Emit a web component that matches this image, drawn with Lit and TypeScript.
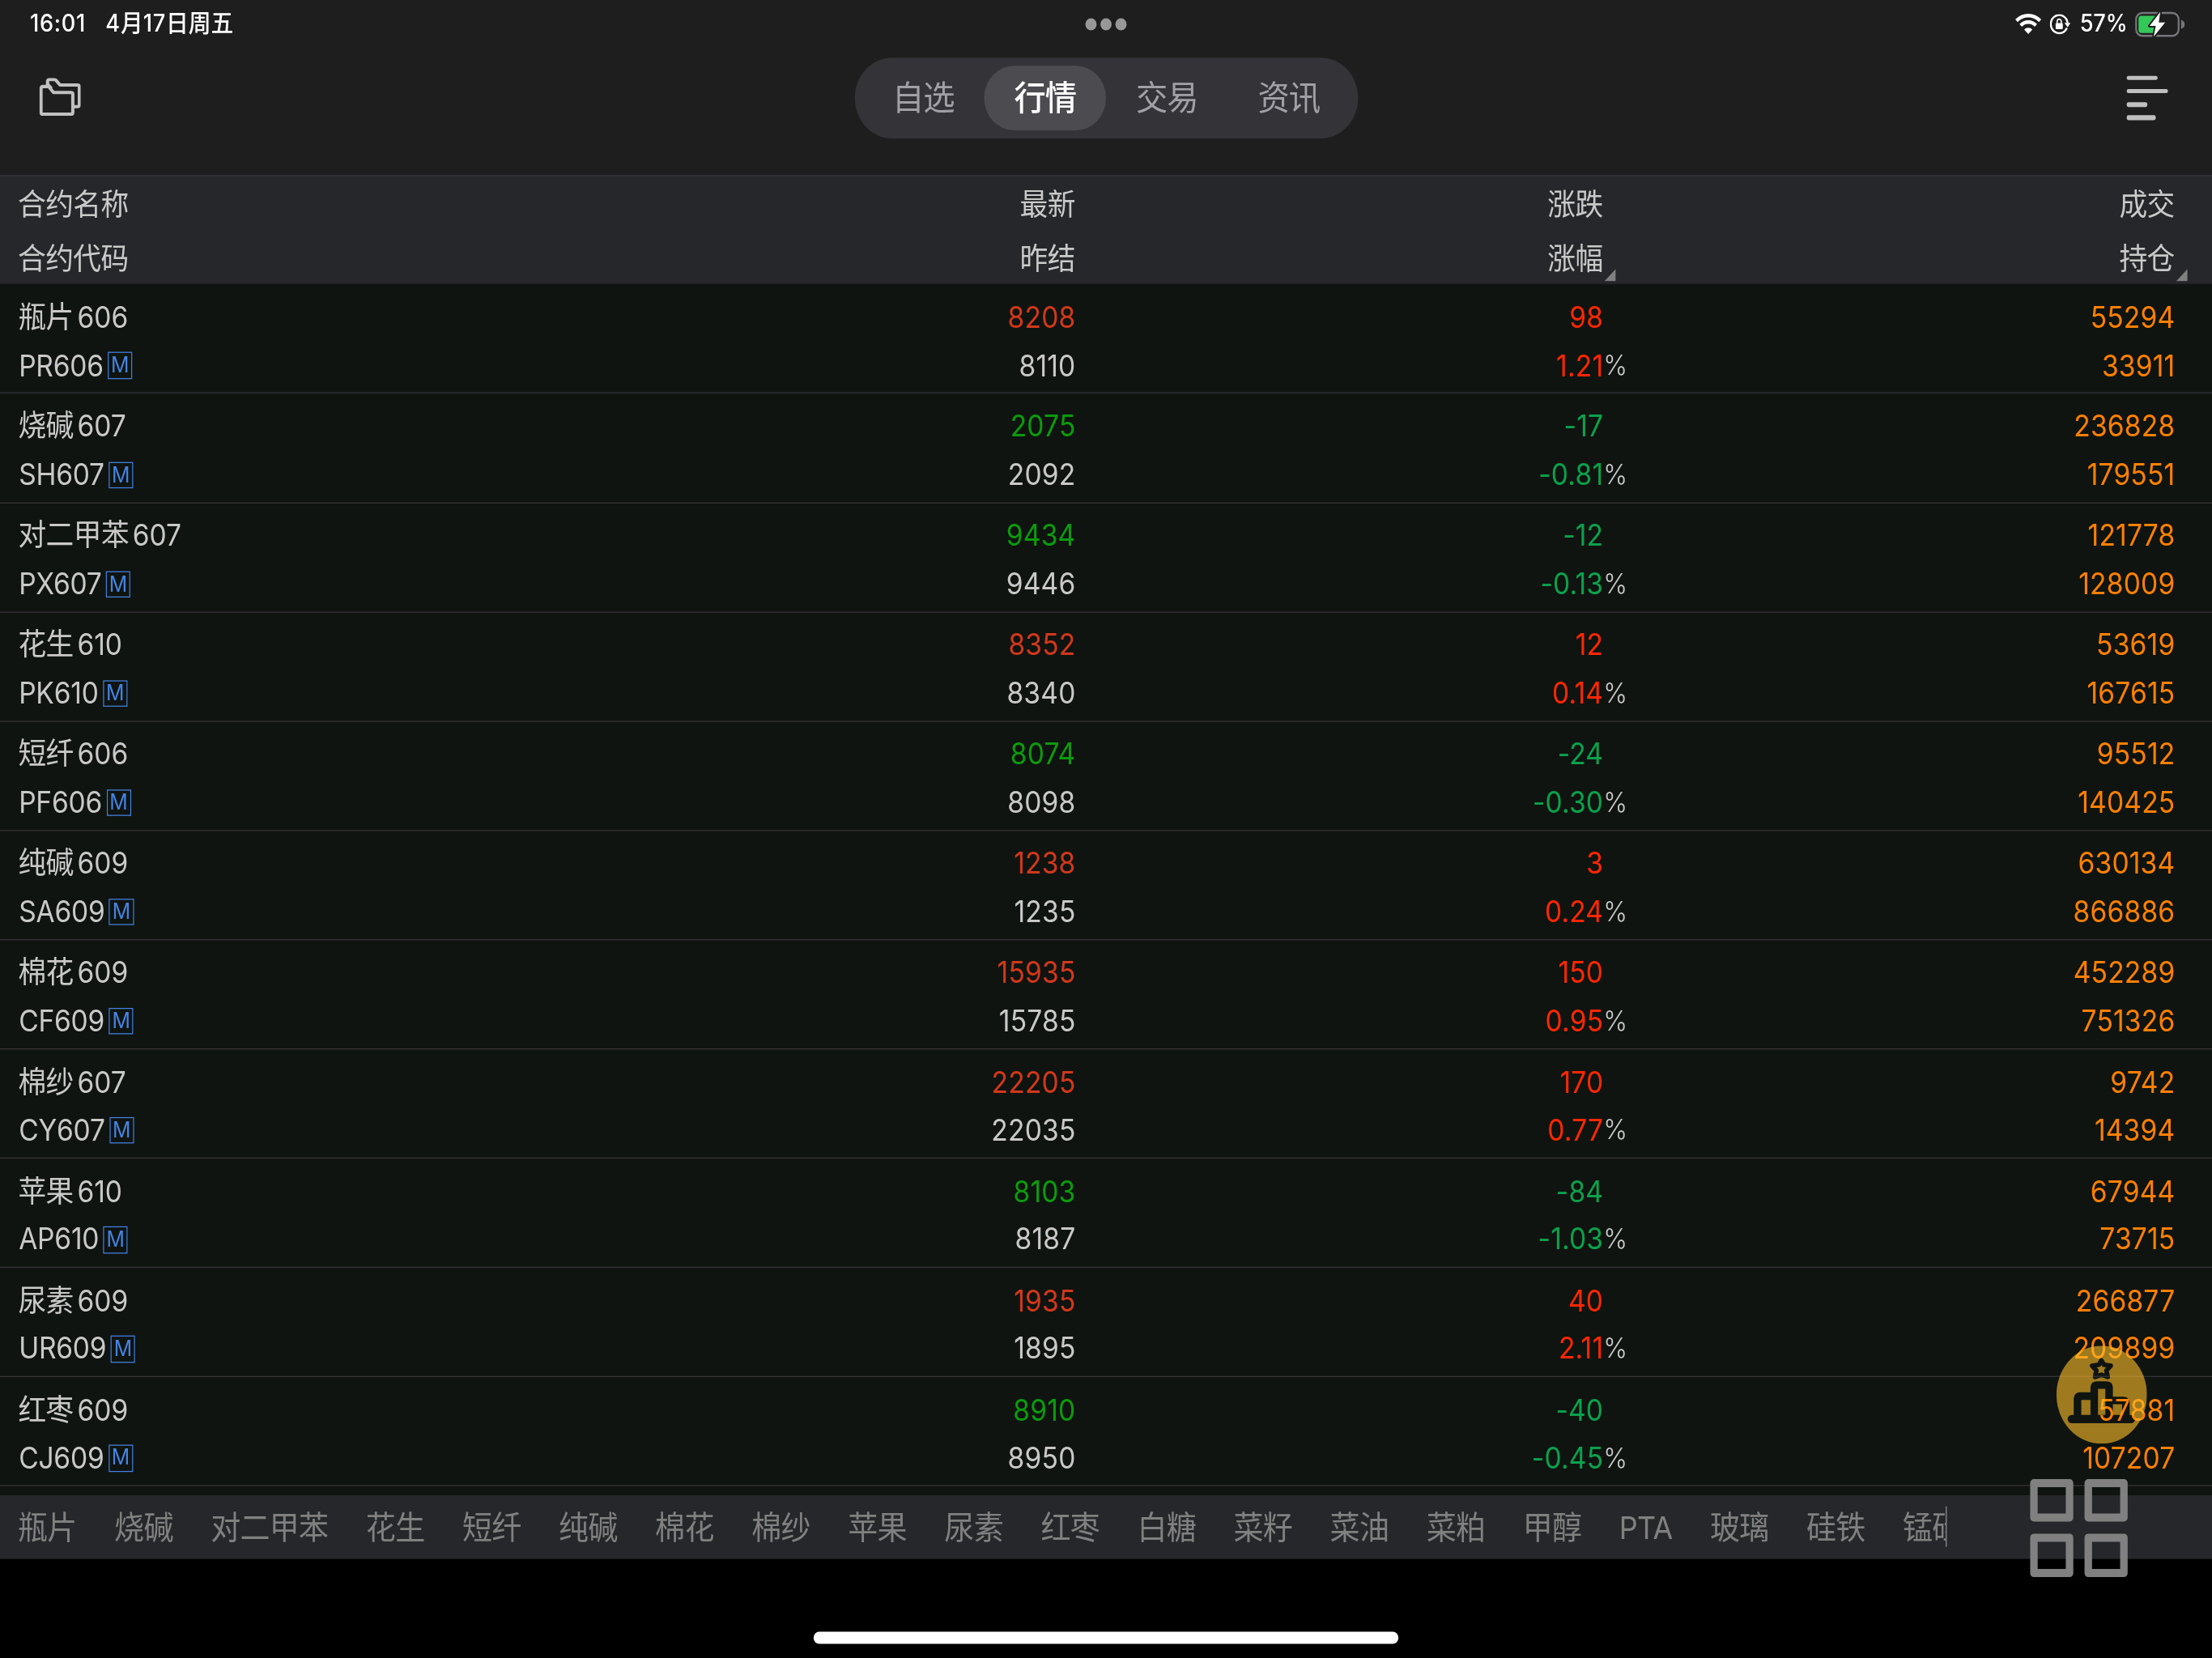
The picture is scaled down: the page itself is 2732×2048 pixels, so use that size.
import { LitElement, html, css, svg } from "lit";
import { customElement, property } from "lit/decorators.js";

type Quote = [name: string, month: string, code: string, last: string, prev: string, diff: string, pct: string, vol: string, oi: string];

const QUOTES: Quote[] = [
  ["瓶片", "606", "PR606", "8208", "8110", "98", "1.21", "55294", "33911"],
  ["烧碱", "607", "SH607", "2075", "2092", "-17", "-0.81", "236828", "179551"],
  ["对二甲苯", "607", "PX607", "9434", "9446", "-12", "-0.13", "121778", "128009"],
  ["花生", "610", "PK610", "8352", "8340", "12", "0.14", "53619", "167615"],
  ["短纤", "606", "PF606", "8074", "8098", "-24", "-0.30", "95512", "140425"],
  ["纯碱", "609", "SA609", "1238", "1235", "3", "0.24", "630134", "866886"],
  ["棉花", "609", "CF609", "15935", "15785", "150", "0.95", "452289", "751326"],
  ["棉纱", "607", "CY607", "22205", "22035", "170", "0.77", "9742", "14394"],
  ["苹果", "610", "AP610", "8103", "8187", "-84", "-1.03", "67944", "73715"],
  ["尿素", "609", "UR609", "1935", "1895", "40", "2.11", "266877", "209899"],
  ["红枣", "609", "CJ609", "8910", "8950", "-40", "-0.45", "57881", "107207"],
];

const PRODUCTS = ["瓶片", "烧碱", "对二甲苯", "花生", "短纤", "纯碱", "棉花", "棉纱", "苹果", "尿素", "红枣", "白糖", "菜籽", "菜油", "菜粕", "甲醇", "PTA", "玻璃", "硅铁", "锰硅"];

const TABS = ["自选", "行情", "交易", "资讯"];

@customElement("status-bar")
class StatusBar extends LitElement {
  static styles = css`
    :host {
      display: grid;
      grid-template-columns: 1fr auto 1fr;
      align-items: center;
      height: 47px;
      padding: 0 29px;
      color: #fff;
      font-weight: 500;
      font-size: 24px;
    }
    .left { display: flex; gap: 21px; align-items: center; padding: 0 0 0.4px 3px; line-height: 32px; }
    .lat { font-size: 23.5px; letter-spacing: 0.6px; }
    .dots { display: flex; gap: 3.8px; }
    .dot { width: 12px; height: 12px; border-radius: 50%; background: #989898; }
    .right { display: flex; justify-content: flex-end; align-items: center; }
    .wifi { width: 28px; height: 21px; margin-right: 9px; display: block; }
    .lock { width: 22px; height: 20px; margin-right: 10px; display: block; }
    .pct { margin-right: 9.5px; letter-spacing: -0.1px; width: 49.6px; line-height: 32px; padding-bottom: 0.6px; }
    .battery { width: 53px; height: 26px; display: block; }
  `;
  render() {
    return html`
      <div class="left">
        <span class="lat">16:01</span>
        <span><span class="lat">4</span>月<span class="lat">17</span>日周五</span>
      </div>
      <div class="dots"><i class="dot"></i><i class="dot"></i><i class="dot"></i></div>
      <div class="right">
        <svg class="wifi" viewBox="0 0 28 21">
          <g fill="none" stroke="#fff" stroke-width="3.6">
            <path d="M1.4 7.6 A18 18 0 0 1 26.6 7.6" />
            <path d="M5.9 12.2 A11.6 11.6 0 0 1 22.1 12.2" />
          </g>
          <path fill="#fff" d="M14 20.6 L9.6 16.2 A6.3 6.3 0 0 1 18.4 16.2 Z" />
        </svg>
        <svg class="lock" viewBox="0 0 22 20">
          <path d="M18.2 13.6 A9 9 0 1 1 18.9 8.6" fill="none" stroke="#fff" stroke-width="2" />
          <path d="M15.6 8.6 H22 L19 13 Z" fill="#fff" />
          <rect x="6.2" y="8.8" width="7.6" height="6" rx="1" fill="#fff" />
          <path d="M7.8 9 V7.2 a2.2 2.2 0 0 1 4.4 0 V9" fill="none" stroke="#fff" stroke-width="1.4" />
        </svg>
        <span class="lat pct">57%</span>
        <svg class="battery" viewBox="0 0 53 26">
          <rect x="1" y="1.8" width="45.4" height="22.6" rx="6.6" fill="none" stroke="#76767a" stroke-width="2" />
          <path d="M49 8.6 q4 1.2 4 4.5 t-4 4.5 z" fill="#76767a" />
          <path d="M6.6 4.6 H21.5 V21.6 H6.6 a3 3 0 0 1 -3 -3 V7.6 a3 3 0 0 1 3 -3 z" fill="#34c759" />
          <path d="M26.8 0.9 L15.4 14.6 H22 L19.8 25.3 L32 11.3 H25.2 Z" fill="#fff" stroke="#1e1e1e" stroke-width="3.2" stroke-linejoin="round" paint-order="stroke" />
        </svg>
      </div>
    `;
  }
}

@customElement("nav-bar")
class NavBar extends LitElement {
  static styles = css`
    :host {
      display: grid;
      grid-template-columns: 1fr auto 1fr;
      align-items: start;
      height: 116px;
      padding: 10px 42px;
    }
    .folder { width: 44.4px; height: 37.6px; margin-top: 20px; display: block; }
    .tabs { display: flex; padding: 8px 8.5px; height: 64px; border-radius: 40px; background: #343438; }
    .tab {
      width: 130px;
      line-height: 64px;
      border-radius: 32px;
      text-align: center;
      font-size: 34px;
      font-weight: 400;
      letter-spacing: -0.9px;
      color: #a1a0a6;
    }
    .on { background: #4c4b50; color: #fff; font-weight: 500; }
    .menu { justify-self: end; width: 44px; display: flex; flex-direction: column; gap: 8.3px; margin: 17.6px 5.5px 0 0; }
    .bar { height: 4.8px; border-radius: 2px; background: #c1c0c1; }
    .b1 { width: 33px; }
    .b2 { width: 44px; }
    .b3 { width: 22px; }
    .b4 { width: 31px; }
  `;
  render() {
    return html`
      <svg class="folder" viewBox="0 0 153 140" preserveAspectRatio="none">
        <g fill="none" stroke="#c1c0c1" stroke-width="12" stroke-linejoin="round">
          <path d="M6 42 Q6 32 14 32 H30 Q36 32 40 39 L52 54 H116 Q123 54 123 61 V126 Q123 134 116 134 H14 Q6 134 6 126 Z" />
          <path d="M30 33 V14 Q30 6 38 6 H54 Q59 6 63 11 L76 26.5 H140 Q147 26.5 147 34 V98 Q147 106 140 106 H124" />
          <path d="M30 20 L46 38" stroke-width="8" />
        </g>
      </svg>
      <div class="tabs">
        ${TABS.map((t, i) => html`<div class="tab ${i === 1 ? "on" : ""}">${t}</div>`)}
      </div>
      <div class="menu">
        <i class="bar b1"></i><i class="bar b2"></i><i class="bar b3"></i><i class="bar b4"></i>
      </div>
    `;
  }
}

@customElement("quote-row")
class QuoteRow extends LitElement {
  @property({ attribute: false }) quote!: Quote;
  static styles = css`
    :host {
      display: grid;
      grid-template-columns: 580px 547px 563px 610px;
      align-content: start;
      box-sizing: border-box;
      height: 108.08px;
      padding: 8.6px 20px 0;
      border-bottom: 1.6px solid #38363a;
      line-height: 47.8px;
      font-size: 29px;
      letter-spacing: 0.15px;
      color: #c9c9c9;
    }
    .name { font-size: 30px; letter-spacing: -0.5px; margin-left: -0.6px; }
    .month { font-size: 29px; margin-left: 4px; letter-spacing: 0; }
    .code { display: flex; align-items: center; gap: 4.6px; letter-spacing: -0.2px; }
    .badge {
      box-sizing: border-box;
      width: 26.2px;
      height: 26.4px;
      border: 1.7px solid #4583e4;
      color: #4583e4;
      font-size: 21.5px;
      line-height: 23.4px;
      text-align: center;
      letter-spacing: 0;
    }
    .num { text-align: right; margin-right: -0.6px; }
    .pct { display: flex; justify-content: flex-end; margin-right: -0.6px; }
    .unit { width: 0; overflow: visible; font-size: 27.5px; font-weight: 300; white-space: nowrap; }
    .up { color: #d2381a; }
    .down { color: #0c9b0d; }
    .rise { color: #ff2700; }
    .fall { color: #0ba14c; }
    .vol { color: #ff8000; }
  `;
  render() {
    const [name, month, code, last, prev, diff, pct, vol, oi] = this.quote;
    const neg = diff.startsWith("-");
    return html`
      <div class="name">${name}<span class="month">${month}</span></div>
      <div class="num ${neg ? "down" : "up"}">${last}</div>
      <div class="num ${neg ? "fall" : "rise"}">${diff}</div>
      <div class="num vol">${vol}</div>
      <div class="code"><span>${code}</span><span class="badge">M</span></div>
      <div class="num">${prev}</div>
      <div class="pct"><span class="${neg ? "fall" : "rise"}">${pct}</span><span class="unit">%</span></div>
      <div class="num vol">${oi}</div>
    `;
  }
}

@customElement("product-strip")
class ProductStrip extends LitElement {
  static styles = css`
    :host { display: flex; align-items: center; height: 63px; padding-left: 19px; background: #26272b; flex: none; }
    .list {
      box-sizing: border-box;
      display: flex;
      gap: 40.1px;
      width: 2058.4px;
      height: 40px;
      overflow: hidden;
      border-right: 1.6px solid #97979b;
      line-height: 41.2px;
      font-size: 32px;
      letter-spacing: -0.62px;
      color: #808080;
      white-space: nowrap;
    }
    .item { flex: none; }
    .lat { font-size: 31px; }
  `;
  render() {
    return html`<div class="list">
      ${PRODUCTS.map((p) => html`<span class="item ${p === "PTA" ? "lat" : ""}">${p}</span>`)}
    </div>`;
  }
}

const podium = svg`
  <mask id="podium">
    <rect width="335" height="364" fill="#fff" />
    <g fill="none" stroke="#000" stroke-linejoin="round" stroke-linecap="round">
      <path stroke-width="17" d="M166.5 55 L176 71 L201 75 L185 92 L190 116 L166.5 108 L143 116 L148 92 L132 75 L157 71 Z" />
      <path stroke-width="28" stroke-linecap="butt" d="M78 270 V196 Q78 187 87 187 H140 M140 270 V154 Q140 146 149 146 H186 Q195 146 195 154 V270 M195 203 H248 Q257 203 257 212 V270" />
      <path stroke-width="31" d="M57 272 H276" />
    </g>
  </mask>
  <ellipse cx="167.5" cy="182" rx="167.5" ry="182" fill="rgba(255,190,41,0.6)" mask="url(#podium)" />
`;

@customElement("app-root")
class AppRoot extends LitElement {
  static styles = css`
    :host { display: block; width: 2732px; height: 2048px; overflow: hidden; background: #000; }
    .screen {
      position: relative;
      width: 2360px;
      height: 1640px;
      display: flex;
      flex-direction: column;
      transform: scale(1.157627, 1.24878);
      transform-origin: 0 0;
      background: #000;
      font-family: Inter, "Noto Sans CJK SC", sans-serif;
    }
    .top { background: #1e1e1e; height: 173px; flex: none; }
    .head {
      flex: none;
      display: grid;
      grid-template-columns: 580px 547px 563px 610px;
      box-sizing: border-box;
      height: 108.4px;
      padding: 0 20px;
      border-top: 2px solid #2e2e33;
      background: #26272b;
      color: #c9c9c9;
      font-size: 30px;
      letter-spacing: -0.5px;
      line-height: 54px;
    }
    .cell { text-align: right; }
    .first { text-align: left; margin-left: -1px; }
    .sort { display: flex; justify-content: flex-end; align-items: flex-end; }
    .tri { width: 12.4px; height: 12.4px; margin: 0 -13.9px 4.6px 1.5px; background: #808080; clip-path: polygon(100% 0, 100% 100%, 0 100%); }
    .rows { flex: none; height: 1197.6px; background: #0f1410; }
    .foot { flex: 1; display: flex; justify-content: center; align-items: flex-end; }
    .home { width: 624px; height: 11.6px; border-radius: 6px; background: #fff; margin-bottom: 14.4px; }
    .fab { position: absolute; left: 2194.2px; top: 1330.6px; width: 96.6px; height: 97.2px; }
    .apps {
      position: absolute;
      left: 2166.2px;
      top: 1462.7px;
      display: grid;
      grid-template-columns: 45.8px 45.8px;
      gap: 12.2px;
    }
    .app { box-sizing: border-box; width: 45.8px; height: 42.4px; border: 8.1px solid #808080; border-radius: 4px; }
  `;
  render() {
    return html`
      <div class="screen">
        <div class="top">
          <status-bar></status-bar>
          <nav-bar></nav-bar>
        </div>
        <div class="head">
          <div class="first">合约名称</div>
          <div class="cell">最新</div>
          <div class="cell">涨跌</div>
          <div class="cell">成交</div>
          <div class="first">合约代码</div>
          <div class="cell">昨结</div>
          <div class="sort">涨幅<i class="tri"></i></div>
          <div class="sort">持仓<i class="tri"></i></div>
        </div>
        <div class="rows">${QUOTES.map((q) => html`<quote-row .quote=${q}></quote-row>`)}</div>
        <product-strip></product-strip>
        <div class="foot"><div class="home"></div></div>
        <svg class="fab" viewBox="0 0 335 364" preserveAspectRatio="none">${podium}</svg>
        <div class="apps">
          <i class="app"></i><i class="app"></i><i class="app"></i><i class="app"></i>
        </div>
      </div>
    `;
  }
}
